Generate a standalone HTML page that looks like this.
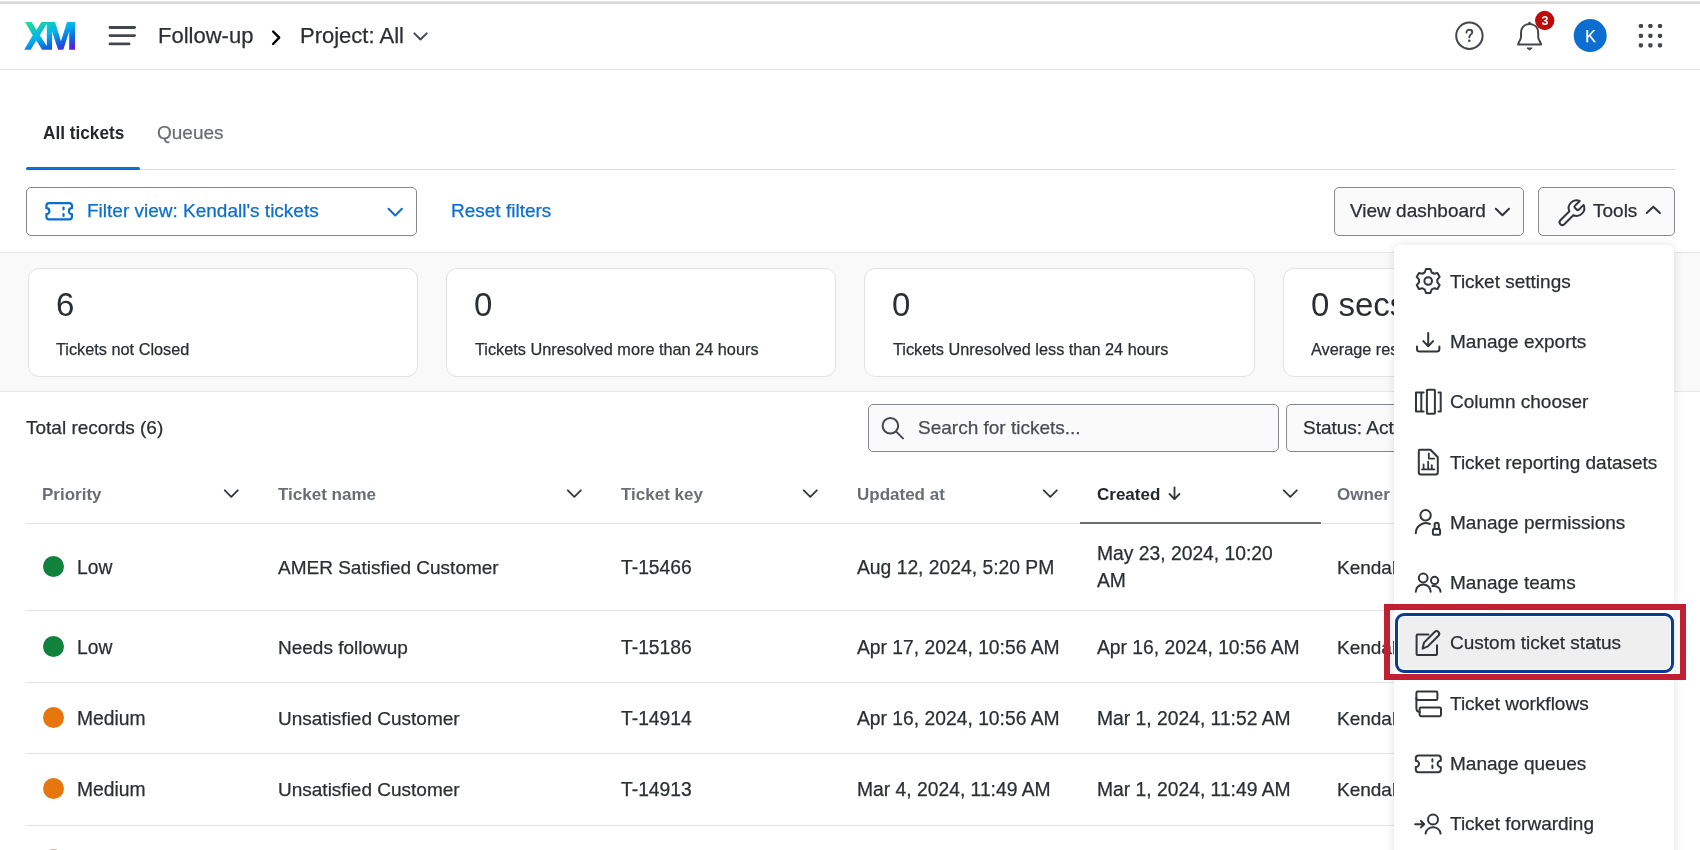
<!DOCTYPE html>
<html><head><meta charset="utf-8">
<style>
*{box-sizing:border-box;margin:0;padding:0}
html,body{will-change:transform;width:1700px;height:850px;overflow:hidden;background:#fff;font-family:"Liberation Sans",sans-serif;color:#2b2f33;position:relative}
.abs{position:absolute}
.t{position:absolute;white-space:nowrap;line-height:1;-webkit-text-stroke:0.25px currentColor}
#topline{left:0;top:1px;width:1700px;height:3px;background:linear-gradient(#eeeeee,#d0d2d2 60%,#e4e5e5)}
#hdrline{left:0;top:69px;width:1700px;height:1px;background:#e3e3e3}
.tabline{left:26px;top:169px;width:1649px;height:1px;background:#dcdcdc}
.tabact{left:26px;top:167px;width:114px;height:3px;background:#0b6ed0;border-radius:2px}
.btn{position:absolute;border:1px solid #84878b;border-radius:5px;background:#fafafa}
#band{left:0;top:252px;width:1700px;height:140px;background:#f9f9f9;border-top:1px solid #e6e6e6;border-bottom:1px solid #e6e6e6}
.card{position:absolute;top:268px;height:109px;width:390px;background:#fff;border:1px solid #e3e3e3;border-radius:11px}
.rowline{position:absolute;left:26px;width:1400px;height:1px;background:#e3e3e3}
.dot{position:absolute;width:21px;height:21px;border-radius:50%}
#menu{left:1394px;top:244.5px;width:280px;height:620px;background:#fff;border-radius:6px;box-shadow:0 0 10px rgba(0,0,0,0.12)}
.mi{position:absolute;left:1450px;font-size:19px;color:#2b2f33;white-space:nowrap;line-height:1;-webkit-text-stroke:0.25px currentColor}
svg{position:absolute;overflow:visible}
.ic{fill:none;stroke:#32363a;stroke-width:2;stroke-linecap:round;stroke-linejoin:round}
</style></head><body>
<div class="abs" id="topline"></div>
<div class="abs" id="hdrline"></div>

<!-- HEADER -->
<svg style="left:0;top:0" width="80" height="60">
<defs><linearGradient id="xmg" x1="0.15" y1="0" x2="0.85" y2="1" gradientUnits="objectBoundingBox">
<stop offset="0" stop-color="#1fdc9c"/><stop offset="0.45" stop-color="#00b2ee"/><stop offset="0.75" stop-color="#1164e0"/><stop offset="1" stop-color="#5b1ee0"/></linearGradient></defs>
<path transform="translate(20 15) scale(0.04706)" fill="url(#xmg)" fill-rule="evenodd" d="M110,148 L250,148 L350,320 L455,148 L745,148 L870,560 L1000,148 L1170,148 L1170,740 L1045,740 L1045,350 L920,740 L810,740 L680,350 L680,740 L470,740 L345,540 L225,740 L90,740 L270,430 Z M570,190 L570,660 L420,430 Z"/>
</svg>
<svg style="left:0;top:0" width="140" height="60"><g stroke="#44484d" stroke-width="2.8" stroke-linecap="round"><line x1="110" y1="27.5" x2="134.6" y2="27.5"/><line x1="110" y1="35.6" x2="134.6" y2="35.6"/><line x1="110" y1="43.9" x2="129" y2="43.9"/></g></svg>
<div class="t" style="left:158px;top:25px;font-size:22px">Follow-up</div>
<svg style="left:0;top:0" width="440" height="60"><polyline points="273.1,31.5 279.2,37.7 273.1,44" fill="none" stroke="#000" stroke-width="2.4" stroke-linecap="round" stroke-linejoin="round"/>
<polyline points="414.4,33.4 420.5,39.5 426.7,33.4" fill="none" stroke="#44484d" stroke-width="2" stroke-linecap="round" stroke-linejoin="round"/></svg>
<div class="t" style="left:300px;top:25px;font-size:22px">Project: All</div>

<svg style="left:0;top:0" width="1700" height="60">
<circle cx="1469.4" cy="35.7" r="13.2" fill="none" stroke="#44484d" stroke-width="2"/>
<path d="M1466.5,32.5 C1466.5,30.6 1467.8,29.7 1469.4,29.7 C1471,29.7 1472.3,30.7 1472.3,32.2 C1472.3,34.2 1469.3,34.6 1469.3,37.2" fill="none" stroke="#44484d" stroke-width="1.9" stroke-linecap="round"/>
<circle cx="1469.3" cy="40.8" r="1.3" fill="#44484d"/>
<path d="M1521,33.3 C1521,27.2 1524.8,24.1 1529.6,24.1 C1534.4,24.1 1538.2,27.2 1538.2,33.3 L1538.2,37 C1538.2,40 1541,42.5 1541.1,44.5 L1518.1,44.5 C1518.2,42.5 1521,40 1521,37 Z" fill="none" stroke="#44484d" stroke-width="2" stroke-linejoin="round"/>
<path d="M1527,48 L1532.2,48 L1529.6,50 Z" fill="#44484d" stroke="#44484d" stroke-width="1" stroke-linejoin="round"/>
<circle cx="1529.6" cy="23.2" r="1.5" fill="#44484d"/>
<circle cx="1544.7" cy="20.5" r="9.7" fill="#bf0a0a"/>
<circle cx="1590.2" cy="35.6" r="16.5" fill="#0b6ed0"/>
<g fill="#44484d">
<rect x="1638.8" y="23.9" width="4.2" height="4.2" rx="1.4"/><rect x="1648.3" y="23.9" width="4.2" height="4.2" rx="1.4"/><rect x="1657.9" y="23.9" width="4.2" height="4.2" rx="1.4"/>
<rect x="1638.8" y="33.7" width="4.2" height="4.2" rx="1.4"/><rect x="1648.3" y="33.7" width="4.2" height="4.2" rx="1.4"/><rect x="1657.9" y="33.7" width="4.2" height="4.2" rx="1.4"/>
<rect x="1638.8" y="43.2" width="4.2" height="4.2" rx="1.4"/><rect x="1648.3" y="43.2" width="4.2" height="4.2" rx="1.4"/><rect x="1657.9" y="43.2" width="4.2" height="4.2" rx="1.4"/>
</g>
</svg>
<div class="t" style="left:1540.5px;top:15px;width:9px;text-align:center;font-size:12.5px;font-weight:bold;-webkit-text-stroke:0;color:#fff">3</div>
<div class="t" style="left:1584px;top:28.7px;width:13px;text-align:center;font-size:15.8px;color:#fff">K</div>

<!-- Tabs -->
<div class="t" style="left:43px;top:123px;font-size:19px;font-weight:bold;-webkit-text-stroke:0;color:#24282c;transform-origin:0 0;transform:scaleX(0.905)">All tickets</div>
<div class="t" style="left:157px;top:123px;font-size:19px;color:#6a6e73">Queues</div>
<div class="abs tabline"></div>
<div class="abs tabact"></div>

<!-- Filter row -->
<div class="btn" style="left:26px;top:187px;width:391px;height:49px;background:#fff"></div>
<svg style="left:0;top:0" width="600" height="250">
<path d="M49,203.2 L69.3,203.2 Q71.9,203.2 71.9,205.8 L71.9,208.2 A3,3 0 0 0 71.9,214.2 L71.9,216.7 Q71.9,219.3 69.3,219.3 L49,219.3 Q46.4,219.3 46.4,216.7 L46.4,214.2 A3,3 0 0 0 46.4,208.2 L46.4,205.8 Q46.4,203.2 49,203.2 Z" fill="none" stroke="#0b6ed0" stroke-width="2.2" stroke-linejoin="round"/>
<line x1="63.5" y1="207.5" x2="63.5" y2="209.5" stroke="#0b6ed0" stroke-width="2.2" stroke-linecap="round"/>
<line x1="63.5" y1="214" x2="63.5" y2="216" stroke="#0b6ed0" stroke-width="2.2" stroke-linecap="round"/>
<polyline points="388.5,208.8 395.2,215.5 401.9,208.8" fill="none" stroke="#0b6ed0" stroke-width="2" stroke-linecap="round" stroke-linejoin="round"/>
</svg>
<div class="t" style="left:87px;top:201px;font-size:19px;color:#0b6ed0">Filter view: Kendall's tickets</div>
<div class="t" style="left:451px;top:201px;font-size:19px;color:#0b6ed0">Reset filters</div>
<div class="btn" style="left:1334px;top:187px;width:190px;height:49px"></div>
<div class="t" style="left:1350px;top:201px;font-size:19px">View dashboard</div>
<div class="btn" style="left:1538px;top:187px;width:137px;height:49px"></div>
<div class="t" style="left:1593px;top:201px;font-size:19px">Tools</div>
<svg style="left:0;top:0" width="1700" height="250">
<polyline points="1495.8,208.7 1502.4,215.3 1509,208.7" fill="none" stroke="#32363a" stroke-width="2" stroke-linecap="round" stroke-linejoin="round"/>
<polyline points="1646.7,213 1653.3,206.8 1659.9,213" fill="none" stroke="#32363a" stroke-width="2" stroke-linecap="round" stroke-linejoin="round"/>
<g transform="translate(1555.7 197.7) scale(1.3)"><path d="M14.7 6.3a1 1 0 0 0 0 1.4l1.6 1.6a1 1 0 0 0 1.4 0l3.77-3.77a6 6 0 0 1-7.94 7.94l-6.91 6.91a2.12 2.12 0 0 1-3-3l6.91-6.91a6 6 0 0 1 7.94-7.94l-3.76 3.76z" fill="none" stroke="#32363a" stroke-width="1.5" stroke-linejoin="round" stroke-linecap="round"/></g>
</svg>

<!-- Band -->
<div class="abs" id="band"></div>
<div class="card" style="left:28px"></div>
<div class="card" style="left:446px"></div>
<div class="card" style="left:864px;width:391px"></div>
<div class="card" style="left:1283px"></div>
<div class="t" style="left:56px;top:288px;font-size:33px;-webkit-text-stroke:0">6</div>
<div class="t" style="left:56px;top:341px;font-size:16.3px">Tickets not Closed</div>
<div class="t" style="left:474px;top:288px;font-size:33px;-webkit-text-stroke:0">0</div>
<div class="t" style="left:475px;top:341px;font-size:16.3px">Tickets Unresolved more than 24 hours</div>
<div class="t" style="left:892px;top:288px;font-size:33px;-webkit-text-stroke:0">0</div>
<div class="t" style="left:893px;top:341px;font-size:16.3px">Tickets Unresolved less than 24 hours</div>
<div class="t" style="left:1311px;top:288px;font-size:33px;-webkit-text-stroke:0">0 secs</div>
<div class="t" style="left:1311px;top:341px;font-size:16.3px">Average response</div>

<!-- Records -->
<div class="t" style="left:26px;top:418px;font-size:19px">Total records (6)</div>
<div class="btn" style="left:868px;top:404px;width:411px;height:48px"></div>
<svg style="left:0;top:0" width="1000" height="460">
<circle cx="890.4" cy="425.8" r="7.8" fill="none" stroke="#44484d" stroke-width="2"/>
<line x1="896.2" y1="431.6" x2="903" y2="438.4" stroke="#44484d" stroke-width="2" stroke-linecap="round"/>
</svg>
<div class="t" style="left:918px;top:418px;font-size:19px;color:#4a4e53">Search for tickets...</div>
<div class="btn" style="left:1286px;top:404px;width:200px;height:48px"></div>
<div class="t" style="left:1303px;top:418px;font-size:19px">Status: Act</div>

<!-- Table header -->
<div class="t" style="left:42px;top:486px;font-size:17px;font-weight:bold;-webkit-text-stroke:0;color:#6a6e73">Priority</div>
<div class="t" style="left:278px;top:486px;font-size:17px;font-weight:bold;-webkit-text-stroke:0;color:#6a6e73">Ticket name</div>
<div class="t" style="left:621px;top:486px;font-size:17px;font-weight:bold;-webkit-text-stroke:0;color:#6a6e73">Ticket key</div>
<div class="t" style="left:857px;top:486px;font-size:17px;font-weight:bold;-webkit-text-stroke:0;color:#6a6e73">Updated at</div>
<div class="t" style="left:1097px;top:486px;font-size:17px;font-weight:bold;-webkit-text-stroke:0;color:#24282c">Created</div>
<div class="t" style="left:1337px;top:486px;font-size:17px;font-weight:bold;-webkit-text-stroke:0;color:#6a6e73">Owner</div>
<svg style="left:0;top:0" width="1400" height="540"><g fill="none" stroke="#32363a" stroke-width="1.8" stroke-linecap="round" stroke-linejoin="round">
<polyline points="224.8,490.3 231.3,496.8 237.8,490.3"/>
<polyline points="567.8,490.3 574.3,496.8 580.8,490.3"/>
<polyline points="803.8,490.3 810.3,496.8 816.8,490.3"/>
<polyline points="1043.8,490.3 1050.3,496.8 1056.8,490.3"/>
<polyline points="1283.8,490.3 1290.3,496.8 1296.8,490.3"/>
<line x1="1174.5" y1="487.5" x2="1174.5" y2="499"/><polyline points="1169.5,494 1174.5,499 1179.5,494"/>
</g></svg>
<div class="rowline" style="top:523px"></div>
<div class="abs" style="left:1080px;top:522px;width:241px;height:2px;background:#6a6e73"></div>

<!-- Rows -->
<div class="rowline" style="top:610px"></div>
<div class="rowline" style="top:682px"></div>
<div class="rowline" style="top:753px"></div>
<div class="rowline" style="top:825px"></div>

<div class="dot" style="left:42.6px;top:556.2px;background:#11823b"></div>
<div class="t" style="left:77px;top:558px;font-size:19.3px">Low</div>
<div class="t" style="left:278px;top:558px;font-size:19px">AMER Satisfied Customer</div>
<div class="t" style="left:621px;top:558px;font-size:19.3px">T-15466</div>
<div class="t" style="left:857px;top:558px;font-size:19.3px">Aug 12, 2024, 5:20 PM</div>
<div class="t" style="left:1097px;top:544px;font-size:19.3px">May 23, 2024, 10:20</div>
<div class="t" style="left:1097px;top:571px;font-size:19.3px">AM</div>
<div class="t" style="left:1337px;top:558px;font-size:19px">Kendall</div>

<div class="dot" style="left:42.6px;top:636px;background:#11823b"></div>
<div class="t" style="left:77px;top:638px;font-size:19.3px">Low</div>
<div class="t" style="left:278px;top:638px;font-size:19px">Needs followup</div>
<div class="t" style="left:621px;top:638px;font-size:19.3px">T-15186</div>
<div class="t" style="left:857px;top:638px;font-size:19.3px">Apr 17, 2024, 10:56 AM</div>
<div class="t" style="left:1097px;top:638px;font-size:19.3px">Apr 16, 2024, 10:56 AM</div>
<div class="t" style="left:1337px;top:638px;font-size:19px">Kendall</div>

<div class="dot" style="left:42.6px;top:707px;background:#e8760f"></div>
<div class="t" style="left:77px;top:709px;font-size:19.3px">Medium</div>
<div class="t" style="left:278px;top:709px;font-size:19px">Unsatisfied Customer</div>
<div class="t" style="left:621px;top:709px;font-size:19.3px">T-14914</div>
<div class="t" style="left:857px;top:709px;font-size:19.3px">Apr 16, 2024, 10:56 AM</div>
<div class="t" style="left:1097px;top:709px;font-size:19.3px">Mar 1, 2024, 11:52 AM</div>
<div class="t" style="left:1337px;top:709px;font-size:19px">Kendall</div>

<div class="dot" style="left:42.6px;top:778px;background:#e8760f"></div>
<div class="t" style="left:77px;top:780px;font-size:19.3px">Medium</div>
<div class="t" style="left:278px;top:780px;font-size:19px">Unsatisfied Customer</div>
<div class="t" style="left:621px;top:780px;font-size:19.3px">T-14913</div>
<div class="t" style="left:857px;top:780px;font-size:19.3px">Mar 4, 2024, 11:49 AM</div>
<div class="t" style="left:1097px;top:780px;font-size:19.3px">Mar 1, 2024, 11:49 AM</div>
<div class="t" style="left:1337px;top:780px;font-size:19px">Kendall</div>
<div class="dot" style="left:42.6px;top:849px;background:#f0a090"></div>

<!-- MENU -->
<div class="abs" id="menu"></div>
<div class="abs" style="left:1395px;top:613px;width:279px;height:60px;border:3px solid #0a3d91;border-radius:9px;background:#efefef;box-shadow:inset 0 0 0 1px #fff"></div>
<div class="abs" style="left:1384px;top:604px;width:302px;height:76px;border:6px solid #c21f32"></div>

<div class="mi" style="top:272px">Ticket settings</div>
<div class="mi" style="top:332px">Manage exports</div>
<div class="mi" style="top:392px">Column chooser</div>
<div class="mi" style="top:453px">Ticket reporting datasets</div>
<div class="mi" style="top:513px">Manage permissions</div>
<div class="mi" style="top:573px">Manage teams</div>
<div class="mi" style="top:633px">Custom ticket status</div>
<div class="mi" style="top:694px">Ticket workflows</div>
<div class="mi" style="top:754px">Manage queues</div>
<div class="mi" style="top:814px">Ticket forwarding</div>

<svg style="left:0;top:0" width="1700" height="850"><g class="ic">
<!-- gear -->
<g transform="translate(1428.2 281)">
<circle r="3.8"/>
<path d="M-3.45,-8.53 L-2.22,-12.00 L2.22,-12.00 L3.45,-8.53 A9.2,9.2 0 0 1 5.66,-7.25 L9.28,-7.92 L11.50,-4.07 L9.11,-1.28 A9.2,9.2 0 0 1 9.11,1.28 L11.50,4.07 L9.28,7.92 L5.66,7.25 A9.2,9.2 0 0 1 3.45,8.53 L2.22,12.00 L-2.22,12.00 L-3.45,8.53 A9.2,9.2 0 0 1 -5.66,7.25 L-9.28,7.92 L-11.50,4.07 L-9.11,1.28 A9.2,9.2 0 0 1 -9.11,-1.28 L-11.50,-4.07 L-9.28,-7.92 L-5.66,-7.25 A9.2,9.2 0 0 1 -3.45,-8.53 Z"/>
</g>
<!-- download -->
<path d="M1428.2,333 L1428.2,346.2 M1423.3,341.1 L1428.2,346.2 L1433.1,341.1 M1417,346.5 L1417,349 Q1417,351.6 1419.6,351.6 L1436.8,351.6 Q1439.4,351.6 1439.4,349 L1439.4,346.5"/>
<!-- column chooser -->
<path d="M1423.6,392.4 L1416,392.4 L1416,411.4 L1423.6,411.4 M1421.3,392.4 L1421.3,411.4"/>
<rect x="1426.9" y="389.7" width="8" height="24" rx="0.6"/>
<path d="M1438.5,392.4 L1440.7,392.4 L1440.7,411.4 L1438.5,411.4"/>
<!-- report -->
<path d="M1419.8,449.8 L1430.5,449.8 L1437.8,457.2 L1437.8,472.6 Q1437.8,474.4 1436,474.4 L1420.6,474.4 Q1418.8,474.4 1418.8,472.6 L1418.8,450.8 Q1418.8,449.8 1419.8,449.8 Z"/>
<path d="M1428.8,453.5 L1428.8,458.6 L1434.2,458.6" stroke-width="1.8"/>
<path d="M1422,469.4 L1434.4,469.4 M1423.6,469.4 L1423.6,464.4 M1428.2,469.4 L1428.2,461.6 M1431.8,469.4 L1431.8,465.2" stroke-width="1.8"/>
<!-- permissions -->
<circle cx="1425.6" cy="515.3" r="5.2"/>
<path d="M1415.8,533.2 A10,10 0 0 1 1429.8,524"/>
<rect x="1432.9" y="529" width="7.2" height="5.8" rx="1.2"/>
<path d="M1434.6,529 L1434.6,524.9 A2.1,2.1 0 0 1 1438.8,524.9 L1438.8,529"/>
<!-- teams -->
<circle cx="1423.2" cy="578" r="4.4"/>
<path d="M1415.8,591.7 A7.45,7.3 0 0 1 1430.7,591.7"/>
<circle cx="1434.6" cy="580.4" r="3.6"/>
<path d="M1432.4,586.1 C1437.5,585.5 1440.5,588.5 1440.5,591.7"/>
<!-- edit -->
<path d="M1428.4,634.6 L1417.6,634.6 Q1416.6,634.6 1416.6,635.6 L1416.6,654 Q1416.6,655 1417.6,655 L1436,655 Q1437,655 1437,654 L1437,645.2"/>
<path d="M1422.6,648.6 L1424,642.6 L1434.6,632 A2.4,2.4 0 0 1 1438.4,635.8 L1427.8,646.4 Z"/>
<!-- workflows -->
<rect x="1416.4" y="691.5" width="21" height="8.6" rx="1.4"/>
<rect x="1419.6" y="707.6" width="21.4" height="8.6" rx="1.4"/>
<path d="M1416.4,698 L1416.4,708 Q1416.4,711.9 1419.6,711.9"/>
<!-- queues -->
<path d="M1418.4,755.6 L1438.2,755.6 Q1440.8,755.6 1440.8,758.2 L1440.8,760.7 A3.2,3.2 0 0 0 1440.8,767.1 L1440.8,769.6 Q1440.8,772.2 1438.2,772.2 L1418.4,772.2 Q1415.8,772.2 1415.8,769.6 L1415.8,767.1 A3.2,3.2 0 0 0 1415.8,760.7 L1415.8,758.2 Q1415.8,755.6 1418.4,755.6 Z"/>
<path d="M1432.4,759.2 L1432.4,761.6 M1432.4,765.6 L1432.4,768"/>
<!-- forwarding -->
<path d="M1415.2,824.2 L1424.2,824.2 M1421,821 L1424.2,824.2 L1421,827.4"/>
<circle cx="1433" cy="819.6" r="5"/>
<path d="M1425.6,833.6 A7.6,7.6 0 0 1 1440.6,833.6"/>
</g></svg>
</body></html>
